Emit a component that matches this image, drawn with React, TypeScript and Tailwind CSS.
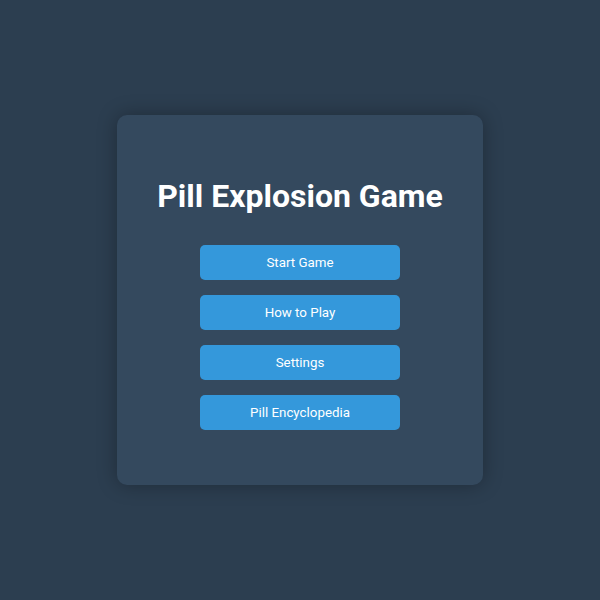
import React from 'react';

const menuItems = ['Start Game', 'How to Play', 'Settings', 'Pill Encyclopedia'];

export default function App() {
  return (
    <div className="min-h-screen w-full bg-[#2c3e50] flex items-center justify-center font-['Roboto',sans-serif]">
      <div className="w-[366px] h-[370px] bg-[#34495e] rounded-[10px] shadow-[0_0_20px_rgba(0,0,0,0.3)] px-10 py-10 flex flex-col items-center">
        <h1 className="mt-[22px] mb-[30px] text-[32px] leading-[38px] font-bold text-white">
          Pill Explosion Game
        </h1>
        {menuItems.map((label) => (
          <button
            key={label}
            className="w-[200px] h-[35px] mb-[15px] bg-[#3498db] rounded-[5px] text-white text-[13.333px]"
          >
            {label}
          </button>
        ))}
      </div>
    </div>
  );
}
